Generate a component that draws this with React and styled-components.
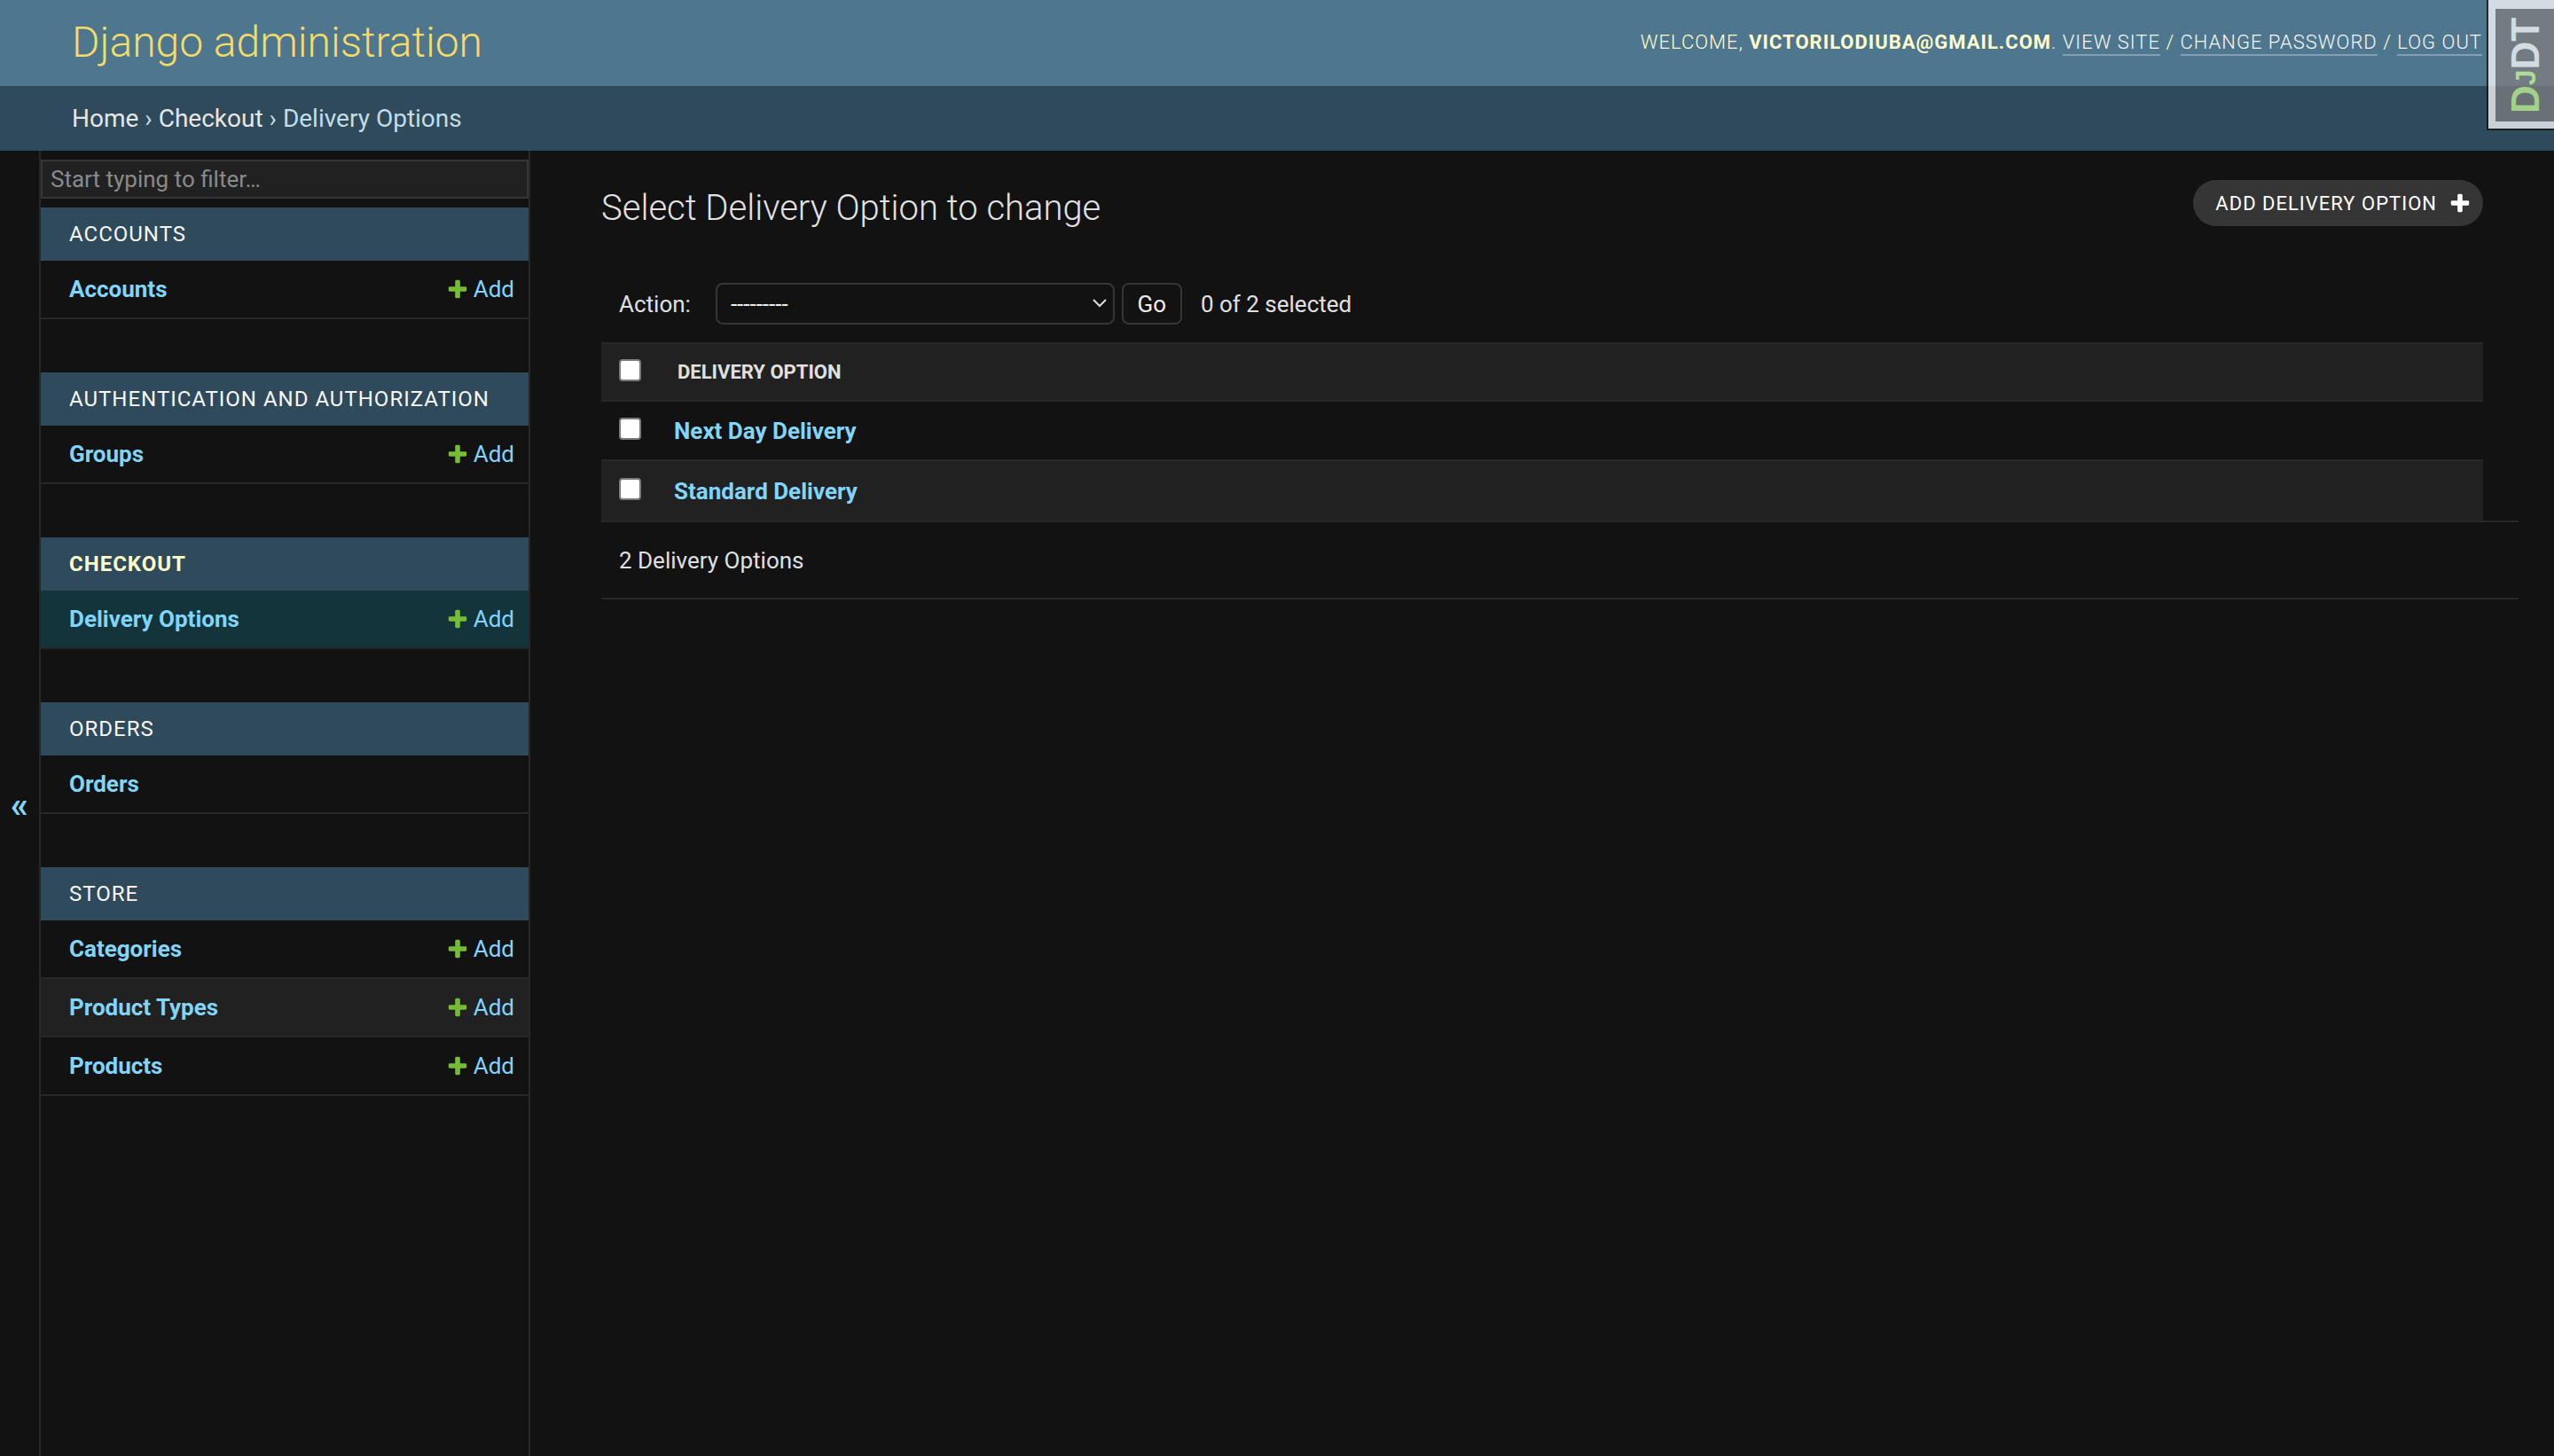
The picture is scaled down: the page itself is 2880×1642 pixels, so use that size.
import React from 'react';
import styled, { createGlobalStyle } from 'styled-components';

const FONT = `Roboto, "Liberation Sans", Arial, sans-serif`;

const GlobalStyle = createGlobalStyle`
  html, body { margin: 0; padding: 0; height: 100%; }
  body {
    background: #121212;
    color: #eeeeee;
    font-family: ${FONT};
  }
  #root { min-height: 100%; }
  *, *::before, *::after { box-sizing: border-box; }
`;

const Container = styled.div`
  position: relative;
  display: flex;
  flex-direction: column;
  min-height: 100vh;
`;

/* ---------- header ---------- */
const Header = styled.header`
  flex: 0 0 97px;
  display: flex;
  align-items: center;
  justify-content: space-between;
  padding: 0 81px 2px 81px;
  background: #4e768e;
`;

const Branding = styled.h1`
  margin: 0;
  font-size: 48px;
  font-weight: 300;
  line-height: 1;
  color: #f3dc67;
`;

const UserTools = styled.div`
  font-size: 22px;
  font-weight: 300;
  letter-spacing: 1px;
  text-transform: uppercase;
  color: #ffffcc;
  white-space: nowrap;
`;

const UserName = styled.strong`
  font-weight: 700;
`;

const ToolLink = styled.a`
  color: #f7f7f7;
  text-decoration: none;
  border-bottom: 2px solid rgba(255, 255, 255, 0.3);
  padding-bottom: 1px;
`;

/* ---------- debug toolbar handle ---------- */
const DjdtHandle = styled.div`
  position: absolute;
  top: 0;
  right: 0;
  width: 76px;
  height: 147px;
  display: flex;
  padding: 10px 0 8px 8px;
  background: #ffffff;
  border-left: 2px solid #111111;
  border-bottom: 2px solid #111111;
  opacity: 0.75;
  z-index: 10;
`;

const DjdtButton = styled.div`
  flex: 1;
  display: flex;
  align-items: center;
  justify-content: center;
  background: rgba(0, 0, 0, 0.5);
  writing-mode: vertical-rl;
  transform: rotate(180deg);
  font-family: "Liberation Sans", Arial, sans-serif;
  font-weight: 700;
  font-size: 44px;
  line-height: 1;
  color: #ffffff;
  padding-right: 2px;
`;

const DjdtLetter = styled.span`
  color: #ccff99;
  font-size: ${(p) => p.$size}px;
`;

/* ---------- breadcrumbs ---------- */
const Breadcrumbs = styled.nav`
  flex: 0 0 73px;
  display: flex;
  align-items: center;
  padding: 0 81px;
  background: #2e4a5b;
  font-size: 28px;
  color: #c4dce8;
  white-space: pre;
`;

const Crumb = styled.a`
  color: #e6e6e6;
  text-decoration: none;
`;

/* ---------- main ---------- */
const Main = styled.div`
  flex: 1 0 auto;
  display: flex;
`;

const SidebarToggle = styled.button`
  flex: 0 0 46px;
  width: 46px;
  padding: 4px 0 0 0;
  border: 0;
  border-right: 2px solid #272727;
  background: #121212;
  color: #81d4fa;
  font-family: ${FONT};
  font-size: 40px;
  font-weight: 700;
  display: flex;
  align-items: center;
  justify-content: center;
`;

const Sidebar = styled.nav`
  flex: 0 0 552px;
  border-right: 2px solid #272727;
  background: #121212;
`;

const Filter = styled.input`
  display: block;
  width: 100%;
  height: 44px;
  margin: 10px 0;
  padding: 0 9px;
  border: 2px solid #353535;
  background: #212121;
  color: #eeeeee;
  font-family: ${FONT};
  font-size: 26px;
  outline: none;
  &::placeholder { color: #8a8a8a; }
`;

const AppModule = styled.section`
  margin-bottom: 60px;
`;

const AppCaption = styled.div`
  padding: 16px 32px;
  line-height: 28px;
  font-size: 24px;
  letter-spacing: 1px;
  text-transform: uppercase;
  background: #2e4a5b;
  color: ${(p) => (p.$current ? '#ffffcc' : '#f7f7f7')};
  font-weight: ${(p) => (p.$current ? 700 : 400)};
`;

const ModelRow = styled.div`
  display: flex;
  align-items: center;
  justify-content: space-between;
  padding: 16px 16px 16px 32px;
  line-height: 32px;
  border-bottom: 2px solid #272727;
  background: ${(p) => (p.$selected ? '#12343a' : p.$shaded ? '#212121' : '#121212')};
`;

const ModelLink = styled.a`
  color: #81d4fa;
  font-size: 26px;
  font-weight: 700;
  text-decoration: none;
`;

const AddLink = styled.a`
  display: inline-flex;
  align-items: center;
  gap: 5px;
  color: #81d4fa;
  font-size: 26px;
  text-decoration: none;
`;

/* ---------- content ---------- */
const Content = styled.main`
  flex: 1;
  min-width: 0;
  padding: 33px 80px 0 80px;
`;

const TopRow = styled.div`
  display: flex;
  align-items: flex-start;
  justify-content: space-between;
`;

const Title = styled.h1`
  margin: 8px 0 0 0;
  font-size: 40px;
  font-weight: 300;
  line-height: 48px;
  color: #e2e2e2;
`;

const AddButton = styled.a`
  display: inline-flex;
  align-items: center;
  gap: 13px;
  height: 52px;
  padding: 0 13px 0 25px;
  border-radius: 26px;
  background: #353535;
  color: #ffffff;
  font-size: 22px;
  letter-spacing: 1px;
  text-transform: uppercase;
  text-decoration: none;
`;

const Actions = styled.div`
  display: flex;
  align-items: center;
  margin-top: 40px;
  padding: 20px;
  font-size: 26px;
  color: #e0e0e0;
`;

const ActionLabel = styled.label`
  margin-right: 28px;
`;

const SelectWrap = styled.div`
  position: relative;
  width: 450px;
  height: 47px;
`;

const ActionSelect = styled.select`
  appearance: none;
  width: 100%;
  height: 100%;
  padding: 0 40px 0 15px;
  border: 2px solid #353535;
  border-radius: 8px;
  background: #121212;
  color: #eeeeee;
  font-family: ${FONT};
  font-size: 26px;
  outline: none;
`;

const Chevron = styled.svg`
  position: absolute;
  right: 8px;
  top: 15px;
  pointer-events: none;
`;

const GoButton = styled.button`
  width: 68px;
  height: 47px;
  margin-left: 8px;
  border: 2px solid #353535;
  border-radius: 8px;
  background: #121212;
  color: #eeeeee;
  font-family: ${FONT};
  font-size: 26px;
  padding: 0;
`;

const Counter = styled.span`
  margin-left: 21px;
`;

const Results = styled.table`
  width: 100%;
  border-collapse: separate;
  border-spacing: 0;
`;

const Cell = styled.td`
  padding: 0;
  text-align: left;
  background: ${(p) => (p.$shaded ? '#212121' : '#121212')};
  border-top: ${(p) => (p.$topLine ? '2px solid #272727' : '0')};
  border-bottom: ${(p) => (p.$bottomLine ? '2px solid #272727' : '0')};
  width: ${(p) => (p.$narrow ? '82px' : 'auto')};
`;

const CellBox = styled.div`
  display: flex;
  align-items: center;
  height: ${(p) => p.$h}px;
  padding-left: ${(p) => p.$pl}px;
`;

const HeadLabel = styled.span`
  font-size: 22px;
  font-weight: 700;
  text-transform: uppercase;
  color: #e0e0e0;
`;

const RowLink = styled.a`
  color: #81d4fa;
  font-size: 26px;
  font-weight: 700;
  text-decoration: none;
`;

const Checkbox = styled.input`
  appearance: none;
  display: block;
  width: 25px;
  height: 25px;
  margin: 0 0 5px 0;
  border: 2px solid #7a7a7a;
  border-radius: 4px;
  background: #ffffff;
`;

const Paginator = styled.p`
  margin: 0 -40px 0 0;
  padding: 21px 20px 20px 20px;
  line-height: 44px;
  font-size: 26px;
  color: #e0e0e0;
  border-top: 2px solid #272727;
  border-bottom: 2px solid #272727;
`;

const PlusIcon = ({ color, size = 26 }) => (
  <svg width={size} height={size} viewBox="0 0 1792 1792" aria-hidden="true">
    <path
      fill={color}
      d="M1600 796v192q0 40-28 68t-68 28h-416v416q0 40-28 68t-68 28h-192q-40 0-68-28t-28-68v-416h-416q-40 0-68-28t-28-68v-192q0-40 28-68t68-28h416v-416q0-40 28-68t68-28h192q40 0 68 28t28 68v416h416q40 0 68 28t28 68z"
    />
  </svg>
);

const apps = [
  { name: 'Accounts', models: [{ name: 'Accounts', add: true }] },
  { name: 'Authentication and Authorization', models: [{ name: 'Groups', add: true }] },
  { name: 'Checkout', current: true, models: [{ name: 'Delivery Options', add: true, selected: true }] },
  { name: 'Orders', models: [{ name: 'Orders', add: false }] },
  {
    name: 'Store',
    models: [
      { name: 'Categories', add: true },
      { name: 'Product Types', add: true, shaded: true },
      { name: 'Products', add: true },
    ],
  },
];

const rows = ['Next Day Delivery', 'Standard Delivery'];

export default function App() {
  return (
    <>
      <GlobalStyle />
      <Container>
        <Header>
          <Branding>Django administration</Branding>
          <UserTools>
            Welcome, <UserName>victorilodiuba@gmail.com</UserName>.{' '}
            <ToolLink href="#">View site</ToolLink> /{' '}
            <ToolLink href="#">Change password</ToolLink> /{' '}
            <ToolLink href="#">Log out</ToolLink>
          </UserTools>
        </Header>
        <Breadcrumbs>
          <Crumb href="#">Home</Crumb>{' › '}<Crumb href="#">Checkout</Crumb>{' › '}Delivery Options
        </Breadcrumbs>
        <Main>
          <SidebarToggle aria-label="Toggle navigation">«</SidebarToggle>
          <Sidebar>
            <Filter placeholder="Start typing to filter…" />
            {apps.map((app) => (
              <AppModule key={app.name}>
                <AppCaption $current={app.current}>{app.name}</AppCaption>
                {app.models.map((m) => (
                  <ModelRow key={m.name} $selected={m.selected} $shaded={m.shaded}>
                    <ModelLink href="#">{m.name}</ModelLink>
                    {m.add && (
                      <AddLink href="#">
                        <PlusIcon color="#76bd35" />
                        Add
                      </AddLink>
                    )}
                  </ModelRow>
                ))}
              </AppModule>
            ))}
          </Sidebar>
          <Content>
            <TopRow>
              <Title>Select Delivery Option to change</Title>
              <AddButton href="#">
                Add Delivery Option
                <PlusIcon color="#ffffff" />
              </AddButton>
            </TopRow>
            <Actions>
              <ActionLabel>Action:</ActionLabel>
              <SelectWrap>
                <ActionSelect defaultValue="">
                  <option value="">---------</option>
                  <option value="delete">Delete selected delivery options</option>
                </ActionSelect>
                <Chevron width="18" height="14" viewBox="0 0 18 14">
                  <polyline points="2,4 9,11 16,4" fill="none" stroke="#dcdcdc" strokeWidth="2" />
                </Chevron>
              </SelectWrap>
              <GoButton>Go</GoButton>
              <Counter>0 of 2 selected</Counter>
            </Actions>
            <Results>
              <thead>
                <tr>
                  <Cell as="th" $narrow $shaded $topLine $bottomLine>
                    <CellBox $h={63} $pl={20}>
                      <Checkbox type="checkbox" />
                    </CellBox>
                  </Cell>
                  <Cell as="th" $shaded $topLine $bottomLine>
                    <CellBox $h={63} $pl={4}>
                      <HeadLabel>Delivery Option</HeadLabel>
                    </CellBox>
                  </Cell>
                </tr>
              </thead>
              <tbody>
                {rows.map((r, i) => {
                  const shaded = i % 2 === 1;
                  const h = shaded ? 67 : 65;
                  return (
                    <tr key={r}>
                      <Cell $narrow $shaded={shaded} $topLine={shaded}>
                        <CellBox $h={h} $pl={20}>
                          <Checkbox type="checkbox" />
                        </CellBox>
                      </Cell>
                      <Cell as="th" $shaded={shaded} $topLine={shaded}>
                        <CellBox $h={h} $pl={0}>
                          <RowLink href="#">{r}</RowLink>
                        </CellBox>
                      </Cell>
                    </tr>
                  );
                })}
              </tbody>
            </Results>
            <Paginator>2 Delivery Options</Paginator>
          </Content>
        </Main>
        <DjdtHandle>
          <DjdtButton>
            <span>
              <DjdtLetter $size={44}>D</DjdtLetter>
              <DjdtLetter $size={32}>J</DjdtLetter>
              DT
            </span>
          </DjdtButton>
        </DjdtHandle>
      </Container>
    </>
  );
}
